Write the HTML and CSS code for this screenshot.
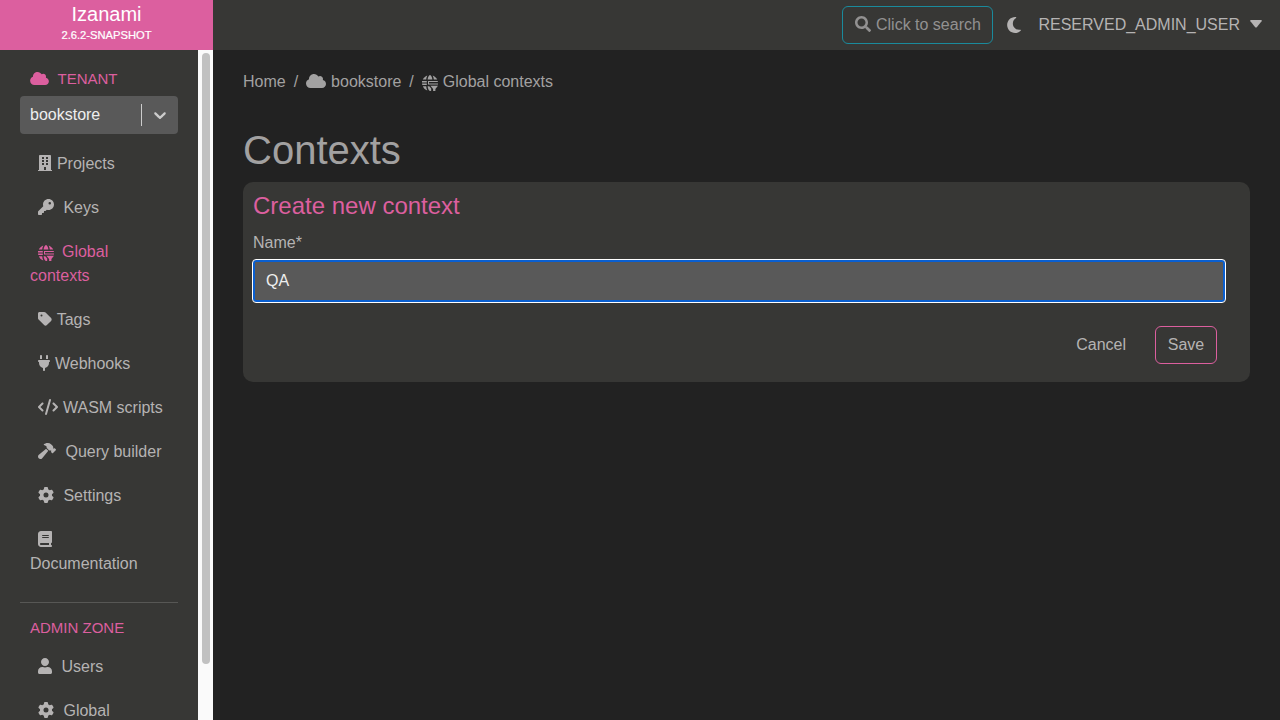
FILE: index.html
```html
<!DOCTYPE html>
<html lang="en">
<head>
<meta charset="utf-8">
<title>Izanami</title>
<link rel="stylesheet" href="styles.css">
</head>
<body>
<svg class="sprite" aria-hidden="true">
  <symbol id="cloud" viewBox="0 0 640 512"><path d="M0 336c0 79.5 64.5 144 144 144H512c70.7 0 128-57.3 128-128c0-61.9-44-113.6-102.4-125.4c4.1-10.7 6.4-22.4 6.4-34.6c0-53-43-96-96-96c-19.7 0-38.1 6-53.3 16.2C367 64.2 315.3 32 256 32C167.6 32 96 103.6 96 192c0 2.7 .1 5.4 .2 8.1C40.2 219.8 0 273.2 0 336z"/></symbol>
  <symbol id="building" viewBox="0 0 448 512"><path fill-rule="evenodd" d="M436 480h-20V24c0-13.300-10.700-24-24-24H56C42.700 0 32 10.700 32 24v456H12c-6.600 0-12 5.400-12 12v20h448v-20c0-6.600-5.400-12-12-12zM128 64h64v64h-64zM256 64h64v64h-64zM128 160h64v64h-64zM256 160h64v64h-64zM128 256h64v64h-64zM256 256h64v64h-64zM192 384h64v96h-64z"/></symbol>
  <symbol id="key" viewBox="0 0 512 512"><path d="M336 352c97.2 0 176-78.8 176-176S433.2 0 336 0S160 78.8 160 176c0 18.700 2.900 36.800 8.300 53.700L7 391c-4.500 4.500-7 10.600-7 17v80c0 13.300 10.700 24 24 24h80c13.300 0 24-10.700 24-24V448h40c13.300 0 24-10.700 24-24V384h40c6.400 0 12.500-2.500 17-7l33.300-33.300c16.900 5.400 35 8.300 53.700 8.300zM376 96a40 40 0 1 1 0 80 40 40 0 1 1 0-80z"/></symbol>
  <symbol id="globe" viewBox="0 0 16 16">
    <path d="M5.600 4.600C5.900 2.300 6.800.3 8 .1c1.200.2 2.100 2.200 2.400 4.500zM4.200 4.600H.8C1.600 2.700 3.300 1.100 5.300.4 4.700 1.500 4.300 3 4.200 4.600zM11.800 4.600h3.400C14.400 2.700 12.700 1.100 10.700.4c.6 1.100 1 2.600 1.100 4.200zM0 6h4.800v1.400H0zM6 6h9.800v1H7v1.500h9v1.100H6zM0 8.500h4.800v1.400H.3zM.9 11.200h3.300c.1 1.600.5 3.100 1.100 4.300C3.300 14.800 1.700 13.200.9 11.200zM5.600 11.200h1.700l1.900 2.300v2.200c-.4.200-.8.300-1.200.3-1.200-.2-2.100-2.400-2.400-4.800zM8.400 10.800H16l-2.600 3.100v2.100h-2.300v-2.100z"/>
  </symbol>
  <symbol id="tag" viewBox="0 0 448 512"><path d="M0 80V229.500c0 17 6.700 33.300 18.700 45.300l176 176c25 25 65.500 25 90.500 0L418.700 317.300c25-25 25-65.500 0-90.500l-176-176c-12-12-28.300-18.700-45.300-18.700H48C21.500 32 0 53.500 0 80zm112 32a32 32 0 1 1 0 64 32 32 0 1 1 0-64z"/></symbol>
  <symbol id="plug" viewBox="0 0 384 512"><path d="M96 0C78.300 0 64 14.300 64 32v96h64V32c0-17.700-14.300-32-32-32zM288 0c-17.700 0-32 14.300-32 32v96h64V32c0-17.700-14.300-32-32-32zM32 160c-17.700 0-32 14.300-32 32s14.300 32 32 32v32c0 77.400 55 142 128 156.800V480c0 17.700 14.300 32 32 32s32-14.300 32-32V412.800C297 398 352 333.400 352 256V224c17.700 0 32-14.300 32-32s-14.300-32-32-32H32z"/></symbol>
  <symbol id="code" viewBox="0 0 640 512"><path d="M392.800 1.200c-17-4.900-34.700 5-39.600 22l-128 448c-4.900 17 5 34.700 22 39.600s34.700-5 39.600-22l128-448c4.900-17-5-34.700-22-39.600zm80.600 120.100c-12.500 12.500-12.500 32.800 0 45.300L562.700 256l-89.400 89.400c-12.500 12.500-12.500 32.800 0 45.300s32.800 12.500 45.300 0l112-112c12.500-12.500 12.500-32.800 0-45.300l-112-112c-12.500-12.500-32.800-12.500-45.300 0zm-306.700 0c-12.500-12.500-32.800-12.500-45.300 0l-112 112c-12.500 12.500-12.500 32.800 0 45.300l112 112c12.500 12.500 32.800 12.500 45.300 0s12.500-32.800 0-45.300L77.300 256l89.400-89.400c12.500-12.500 12.500-32.800 0-45.300z"/></symbol>
  <symbol id="hammer" viewBox="0 0 576 512"><path d="M413.500 237.500c-28.200 4.800-58.200-3.600-80-25.400l-38.100-38.100C280.400 159 272 138.800 272 117.600V105.500L192.300 62c-5.300-2.900-8.600-8.600-8.300-14.700s3.900-11.500 9.500-14l47.200-21C259.100 4.200 279 0 299.200 0h18.100c36.700 0 72 14 98.700 39.100l44.600 42c24.200 22.800 33.200 55.700 26.600 86L503 183l8-8c9.400-9.400 24.600-9.400 33.900 0l24 24c9.400 9.400 9.400 24.600 0 33.900l-88 88c-9.400 9.400-24.600 9.400-33.900 0l-24-24c-9.400-9.400-9.400-24.600 0-33.900l8-8-17.500-17.500zM27.400 377.100L260.900 182.600c3.500 4.900 7.500 9.600 11.800 14l38.100 38.100c6 6 12.400 11.200 19.200 15.700L134.900 484.600c-14.500 17.400-36 27.400-58.600 27.400C34.100 512 0 477.800 0 435.700c0-22.600 10.100-44.100 27.400-58.600z"/></symbol>
  <symbol id="gear" viewBox="0 0 512 512"><path d="M495.900 166.600c3.200 8.700 .5 18.400-6.400 24.600l-43.300 39.400c1.100 8.300 1.700 16.800 1.700 25.400s-.6 17.100-1.700 25.400l43.300 39.400c6.900 6.200 9.600 15.900 6.400 24.600c-4.400 11.900-9.700 23.300-15.800 34.300l-4.700 8.100c-6.600 11-14 21.400-22.100 31.200c-5.900 7.200-15.700 9.600-24.500 6.800l-55.700-17.700c-13.400 10.300-28.200 18.900-44 25.400l-12.500 57.100c-2 9.100-9 16.300-18.200 17.800c-13.800 2.300-28 3.500-42.500 3.500s-28.700-1.200-42.500-3.500c-9.200-1.500-16.200-8.700-18.200-17.800l-12.500-57.100c-15.800-6.500-30.600-15.100-44-25.400L83.100 425.900c-8.800 2.800-18.600 .3-24.500-6.800c-8.100-9.800-15.500-20.200-22.100-31.200l-4.700-8.100c-6.100-11-11.400-22.400-15.800-34.300c-3.200-8.700-.5-18.400 6.400-24.600l43.300-39.400C64.600 273.100 64 264.600 64 256s.6-17.100 1.700-25.400L22.400 191.200c-6.900-6.200-9.600-15.900-6.400-24.600c4.400-11.900 9.700-23.300 15.800-34.300l4.700-8.100c6.600-11 14-21.400 22.100-31.200c5.900-7.200 15.700-9.600 24.500-6.800l55.700 17.700c13.400-10.300 28.200-18.900 44-25.400l12.500-57.100c2-9.100 9-16.300 18.200-17.800C227.300 1.200 241.500 0 256 0s28.700 1.200 42.500 3.500c9.200 1.500 16.200 8.700 18.200 17.800l12.500 57.100c15.800 6.500 30.600 15.100 44 25.400l55.700-17.700c8.800-2.800 18.600-.3 24.500 6.800c8.100 9.800 15.500 20.200 22.100 31.200l4.700 8.100c6.100 11 11.400 22.400 15.800 34.300zM256 336a80 80 0 1 0 0-160 80 80 0 1 0 0 160z"/></symbol>
  <symbol id="book" viewBox="0 0 448 512"><path d="M96 0C43 0 0 43 0 96V416c0 53 43 96 96 96H384h32c17.700 0 32-14.300 32-32s-14.300-32-32-32V384c17.700 0 32-14.300 32-32V32c0-17.700-14.300-32-32-32H384 96zm0 384H352v64H96c-17.700 0-32-14.300-32-32s14.300-32 32-32zm32-240c0-8.800 7.200-16 16-16H336c8.800 0 16 7.200 16 16s-7.200 16-16 16H144c-8.800 0-16-7.200-16-16zm16 48H336c8.800 0 16 7.200 16 16s-7.200 16-16 16H144c-8.800 0-16-7.200-16-16s7.200-16 16-16z"/></symbol>
  <symbol id="user" viewBox="0 0 448 512"><path d="M224 256c70.700 0 128-57.300 128-128S294.700 0 224 0 96 57.300 96 128s57.300 128 128 128zm89.600 32h-16.700c-22.200 10.200-46.900 16-72.900 16s-50.600-5.800-72.900-16h-16.700C60.200 288 0 348.200 0 422.400V464c0 26.500 21.500 48 48 48h352c26.500 0 48-21.500 48-48v-41.600c0-74.200-60.200-134.400-134.400-134.400z"/></symbol>
  <symbol id="search" viewBox="0 0 512 512"><path d="M505 442.700L405.300 343c-4.500-4.500-10.600-7-17-7H372c27.600-35.300 44-79.700 44-128C416 93.100 322.900 0 208 0S0 93.100 0 208s93.100 208 208 208c48.300 0 92.700-16.400 128-44v16.300c0 6.400 2.500 12.500 7 17l99.700 99.700c9.400 9.400 24.600 9.400 33.900 0l28.300-28.300c9.400-9.400 9.400-24.600.1-34zM208 336c-70.700 0-128-57.200-128-128 0-70.700 57.200-128 128-128 70.700 0 128 57.200 128 128 0 70.700-57.200 128-128 128z"/></symbol>
  <symbol id="moon" viewBox="0 32 384 448"><path d="M223.500 32C100 32 0 132.300 0 256S100 480 223.500 480c60.600 0 115.500-24.200 155.800-63.400c5-4.900 6.300-12.500 3.100-18.700s-10.100-9.700-17-8.500c-9.800 1.700-19.800 2.600-30.100 2.600c-96.900 0-175.500-78.800-175.500-176c0-65.800 36-123.100 89.300-153.300c6.100-3.500 9.200-10.500 7.700-17.300s-7.300-11.900-14.300-12.500c-6.300-.5-12.600-.8-19-.8z"/></symbol>
</svg>
<header class="topbar">
  <div class="brand"><div class="brand-name">Izanami</div><div class="brand-version">2.6.2-SNAPSHOT</div></div>
  <div class="tools">
    <button class="search"><svg class="icon w16"><use href="#search"/></svg> Click to search</button>
    <svg class="moon"><use href="#moon"/></svg>
    <span class="account">RESERVED_ADMIN_USER</span><svg class="caret" viewBox="0 0 12 8"><path d="M1 0H11Q12.500 0 11.600 1.200L6.800 7.200Q6 8 5.200 7.200L.4 1.200Q-.5 0 1 0z"/></svg>
  </div>
</header>
<div class="body">
  <aside class="sidebar">
    <nav class="menu">
      <div class="zone"><svg class="icon zone-icon"><use href="#cloud"/></svg>TENANT</div>
      <div class="select"><span class="select-value">bookstore</span><span class="select-arrow"><svg class="chevron" viewBox="0 0 20 20"><path d="M4.516 7.548c0.436-0.446 1.043-0.481 1.576 0l3.908 3.747 3.908-3.747c0.533-0.481 1.141-0.446 1.574 0 0.436 0.445 0.408 1.197 0 1.615-0.406 0.418-4.695 4.502-4.695 4.502-0.217 0.223-0.502 0.335-0.787 0.335s-0.570-0.112-0.789-0.335c0 0-4.287-4.084-4.695-4.502s-0.436-1.170 0-1.615z"/></svg></span></div>
      <ul class="links">
        <li><svg class="icon w14"><use href="#building"/></svg> Projects</li>
        <li><svg class="icon w16 wide"><use href="#key"/></svg> Keys</li>
        <li class="active"><svg class="icon w16 globe"><use href="#globe"/></svg> Global contexts</li>
        <li><svg class="icon w14"><use href="#tag"/></svg> Tags</li>
        <li><svg class="icon w12"><use href="#plug"/></svg> Webhooks</li>
        <li><svg class="icon w20"><use href="#code"/></svg> WASM scripts</li>
        <li><svg class="icon w18 wide"><use href="#hammer"/></svg> Query builder</li>
        <li><svg class="icon w16 wide"><use href="#gear"/></svg> Settings</li>
        <li><svg class="icon w14 wide"><use href="#book"/></svg> Documentation</li>
      </ul>
      <div class="zone admin">ADMIN ZONE</div>
      <ul class="links">
        <li><svg class="icon w14 wide"><use href="#user"/></svg> Users</li>
        <li><svg class="icon w16 wide"><use href="#gear"/></svg> Global</li>
      </ul>
    </nav>
    <div class="track"><div class="thumb"></div></div>
  </aside>
  <main class="content">
    <div class="crumbs"><span>Home</span><span>/</span><span><svg class="icon w20"><use href="#cloud"/></svg> bookstore</span><span>/</span><span><svg class="icon w16 globe"><use href="#globe"/></svg> Global contexts</span></div>
    <h1>Contexts</h1>
    <section class="panel">
      <h2>Create new context</h2>
      <label for="name">Name*</label>
      <input id="name" class="field" type="text" value="QA">
      <div class="actions"><button class="btn">Cancel</button><button class="btn primary">Save</button></div>
    </section>
  </main>
</div>
</body>
</html>
```
FILE: styles.css
```css
* { box-sizing: border-box; }
body { margin: 0; height: 720px; overflow: hidden; background: #222; color: #b5b3b3; font: 16px/24px "Liberation Sans", Arial, sans-serif; }
.sprite { display: block; width: 0; height: 0; }
svg { fill: currentColor; }
.icon { display: inline-block; height: 16px; margin-right: 0.5px; vertical-align: -2px; }
.w12 { width: 12px; }
.w14 { width: 14px; }
.w16 { width: 16px; }
.w18 { width: 18px; }
.w20 { width: 20px; }
.topbar { display: flex; justify-content: space-between; height: 50px; background: #373735; }
.brand { width: 213px; padding-top: 2px; background: #dc5f9f; color: #fff; text-align: center; }
.brand-name { font-size: 20px; line-height: 24px; }
.brand-version { padding-top: 1px; font-size: 11.2px; line-height: 17px; -webkit-text-stroke: 0.2px #fff; }
.tools { display: flex; align-items: center; padding-right: 18px; }
.search { width: 151px; height: 38px; padding: 0; border: 1px solid #1a8a9c; border-radius: 6px; background: none; color: #929191; font: inherit; white-space: nowrap; }
.moon { width: 14px; height: 16px; margin: 0 17px 0 14px; }
.account { margin-right: 10px; }
.caret { width: 12px; height: 8px; margin-top: -2px; }
.body { display: flex; height: 670px; }
.sidebar { display: flex; flex: none; width: 213px; overflow: hidden; background: #373735; }
.menu { width: 198px; padding: 17px 20px 0; }
.zone { height: 29px; padding-left: 10px; color: #dc5f9f; font-size: 15px; line-height: 24px; }
.zone-icon { width: 19px; height: 15px; margin-right: 8.5px; }
.select { display: flex; align-items: center; height: 38px; border-radius: 4px; background: #595959; color: #eee; }
.select-value { flex: 1; padding-left: 10px; }
.select-arrow { display: flex; align-items: center; width: 37px; height: 22px; padding-left: 8px; border-left: 1px solid #ccc; }
.chevron { width: 20px; height: 20px; fill: #ccc; }
.links { margin: 8px 0 0; padding: 0; list-style: none; }
.links li { padding: 10px; }
.links .icon { margin-left: 8px; }
.links .wide { margin-right: 5px; }
.globe { vertical-align: -4px; }
.links .globe { margin-right: 3.5px; }
.active { color: #dc5f9f; }
.admin { height: 39px; margin-top: 16px; padding-top: 13px; border-top: 1px solid #575755; }
.admin + .links { margin-top: 4px; }
.track { width: 15px; padding: 3px 3px 0 4px; background: #fafafa; }
.thumb { height: 611px; border-radius: 4px; background: #c1c1c1; }
.content { flex: 1; padding: 20px 30px 0; }
.crumbs { display: flex; gap: 8px; color: #a2a1a1; }
h1 { margin: 32px 0 8px; color: #a2a1a1; font-size: 40px; font-weight: 400; line-height: 48px; }
.panel { height: 200px; padding: 9px 25px 0 10px; border-radius: 10px; background: #373735; }
h2 { margin: 0 0 11px; color: #dc5f9f; font-size: 24px; font-weight: 400; line-height: 29px; }
label { display: block; margin-bottom: 5px; }
.field { display: block; width: 972px; height: 42px; padding: 0 13px; border: 0; border-radius: 3px; outline: 1px solid #fff; background: #595959; box-shadow: inset 0 0 0 2px #0a5fd0; color: #eee; font: inherit; }
.actions { display: flex; justify-content: flex-end; gap: 16px; padding: 24px 8px 0 0; }
.btn { height: 38px; padding: 0 12px; border: 1px solid transparent; border-radius: 6px; background: none; color: #b5b3b3; font: inherit; }
.primary { width: 62px; padding: 0 11px; border-color: #dc5f9f; }
```
